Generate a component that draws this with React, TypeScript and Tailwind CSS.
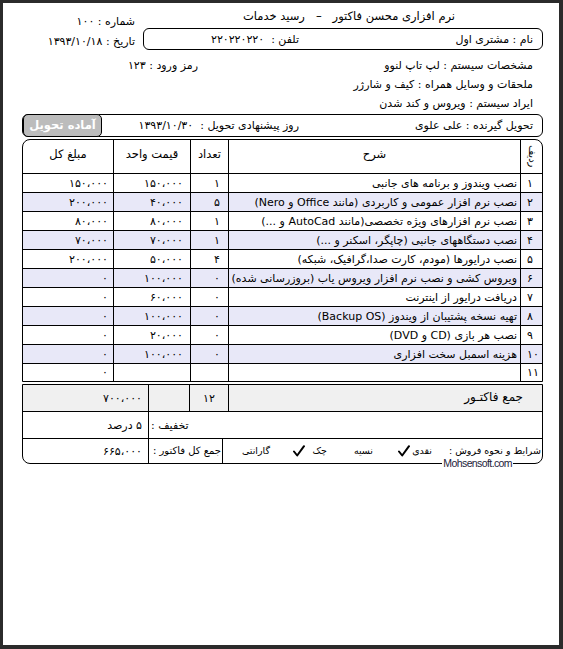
import React from "react";

const rows: { n: string; d: string; q: string; u: string; t: string }[] = [
  { n: "۱", d: "نصب ویندوز و برنامه های جانبی", q: "۱", u: "۱۵۰،۰۰۰", t: "۱۵۰،۰۰۰" },
  { n: "۲", d: "نصب نرم افزار عمومی و کاربردی (مانند Office و Nero)", q: "۵", u: "۴۰،۰۰۰", t: "۲۰۰،۰۰۰" },
  { n: "۳", d: "نصب نرم افزارهای ویژه تخصصی(مانند AutoCad و ...)", q: "۱", u: "۸۰،۰۰۰", t: "۸۰،۰۰۰" },
  { n: "۴", d: "نصب دستگاههای جانبی (چاپگر، اسکنر و ...)", q: "۱", u: "۷۰،۰۰۰", t: "۷۰،۰۰۰" },
  { n: "۵", d: "نصب درایورها (مودم، کارت صدا،گرافیک، شبکه)", q: "۴", u: "۵۰،۰۰۰", t: "۲۰۰،۰۰۰" },
  { n: "۶", d: "ویروس کشی و نصب نرم افزار ویروس یاب (بروزرسانی شده)", q: "۰", u: "۱۰۰،۰۰۰", t: "۰" },
  { n: "۷", d: "دریافت درایور از اینترنت", q: "۰", u: "۶۰،۰۰۰", t: "۰" },
  { n: "۸", d: "تهیه نسخه پشتیبان از ویندوز (Backup OS)", q: "۰", u: "۱۰۰،۰۰۰", t: "۰" },
  { n: "۹", d: "نصب هر بازی (CD و DVD)", q: "۰", u: "۲۰،۰۰۰", t: "۰" },
  { n: "۱۰", d: "هزینه اسمبل سخت افزاری", q: "۰", u: "۱۰۰،۰۰۰", t: "۰" },
  { n: "۱۱", d: "", q: "", u: "", t: "۰" },
];

function Check() {
  return (
    <svg width="12" height="12" viewBox="0 0 12 12" className="shrink-0">
      <path d="M1 6.5 L4.2 10.5 L11 1.2" fill="none" stroke="#000" strokeWidth="2" strokeLinecap="round" strokeLinejoin="round" />
    </svg>
  );
}

export default function App() {
  return (
    <div className="min-h-screen bg-[#2b2b2b] pl-[3px] pt-[3px] pr-[4px] pb-[4px]">
      <div
        dir="rtl"
        className="bg-white h-[642px] pr-[16px] pl-[19px] font-['DejaVu_Sans',sans-serif] text-[11px] text-black leading-none"
      >
        {/* header */}
        <div className="flex">
          <div className="w-[400px] flex flex-col">
            <div className="h-[25px] flex items-center justify-center text-[11.5px] pt-[2px] pl-[12px]">
              نرم افزاری محسن فاکتور&nbsp;&nbsp;&nbsp;–&nbsp;&nbsp;&nbsp;رسید خدمات
            </div>
            <div className="h-[22px] border border-black rounded-[6px] flex items-center whitespace-nowrap">
              <div className="w-[243px] pr-[9px]">نام : مشتری اول</div>
              <div className="flex-1">تلفن :&nbsp; ۲۲۰۲۲۰۲۲۰</div>
            </div>
          </div>
          <div className="flex-1 pr-[8px] pt-[9px] flex flex-col leading-[20px] whitespace-nowrap">
            <div>شماره : ۱۰۰</div>
            <div>تاریخ : ۱۳۹۳/۱۰/۱۸</div>
          </div>
        </div>

        <div className="pt-[4px] leading-[19px] whitespace-nowrap">
          <div className="flex">
            <div className="flex-1 pr-[10px]">مشخصات سیستم : لپ تاپ لنوو</div>
            <div className="w-[176px]">رمز ورود : ۱۲۳</div>
          </div>
          <div className="pr-[10px]">ملحقات و وسایل همراه : کیف و شارژر</div>
          <div className="pr-[10px]">ایراد سیستم : ویروس و کند شدن</div>
        </div>

        {/* delivery */}
        <div className="mt-[1px] h-[23px] border border-black rounded-[6px] flex items-stretch whitespace-nowrap">
          <div className="w-[243px] pr-[9px] flex items-center">تحویل گیرنده : علی علوی</div>
          <div className="flex-1 flex items-center">روز پیشنهادی تحویل :&nbsp; ۱۳۹۳/۱۰/۳۰</div>
          <div className="w-[79px] -my-px border border-black rounded-[5px] bg-[#bcbcbc] text-white font-bold text-[11.5px] flex items-center justify-center">
            آماده تحویل
          </div>
        </div>

        {/* table */}
        <div className="mt-[2px] border border-black rounded-t-[8px] overflow-hidden">
          <div className="h-[34px] border-b border-black grid grid-cols-[22px_292px_38px_77px_1fr] text-[11.5px]">
            <div className="border-l border-black flex items-center justify-center">
              <span className="[writing-mode:vertical-rl] text-[10px]">ردیف</span>
            </div>
            <div className="border-l border-black flex items-center justify-center pb-[3px]">شرح</div>
            <div className="border-l border-black flex items-center justify-center pb-[3px]">تعداد</div>
            <div className="border-l border-black flex items-center justify-center pb-[3px]">قیمت واحد</div>
            <div className="flex items-center justify-center pb-[3px]">مبلغ کل</div>
          </div>
          {rows.map((r, i) => (
            <div
              key={i}
              className={
                (i === rows.length - 1 ? "h-[17px] " : "h-[19px] border-b border-black ") +
                (i % 2 === 1 ? "bg-[#e8e8f8] " : "bg-white ") +
                "grid grid-cols-[22px_292px_38px_77px_1fr]"
              }
            >
              <div className="border-l border-black flex items-center justify-end pl-[6px]">{r.n}</div>
              <div className="border-l border-black flex items-center pr-[3px] whitespace-nowrap overflow-hidden">{r.d}</div>
              <div className="border-l border-black flex items-center justify-start pr-[8px]">{r.q}</div>
              <div className="border-l border-black flex items-center justify-start pr-[7px]">{r.u}</div>
              <div className="flex items-center justify-start pr-[5px]">{r.t}</div>
            </div>
          ))}
        </div>

        {/* summary */}
        <div className="relative mt-[2px] border border-black rounded-b-[8px]">
          <div className="h-[27px] border-b border-black bg-[#f0f0f0] grid grid-cols-[314px_39px_41px_1fr]">
            <div className="border-l border-black pr-[19px] pt-[6px] text-[12px]">جمع فاکتـور</div>
            <div className="border-l border-black flex items-center justify-center">۱۲</div>
            <div className="border-l border-black"></div>
            <div className="flex items-center justify-start pr-[6px]">۷۰۰،۰۰۰</div>
          </div>
          <div className="h-[27px] border-b border-black grid grid-cols-[394px_1fr] whitespace-nowrap">
            <div className="border-l border-black flex items-center justify-end pl-[2px]">تخفیف :</div>
            <div className="flex items-center pr-[6px]">۵ درصد</div>
          </div>
          <div className="h-[24px] grid grid-cols-[320px_74px_1fr] whitespace-nowrap">
            <div className="border-l border-black flex items-center text-[9.5px]">
              <span className="w-[90px] shrink-0 pr-[1px]">شرایط و نحوه فروش :</span>
              <span className="w-[20px] shrink-0"></span>
              <span className="w-[16px] shrink-0">نقدی</span>
              <span className="w-[6px] shrink-0"></span>
              <Check />
              <span className="w-[25px] shrink-0"></span>
              <span className="w-[14px] shrink-0">نسیه</span>
              <span className="w-[32px] shrink-0"></span>
              <span className="w-[14px] shrink-0">چک</span>
              <span className="w-[8px] shrink-0"></span>
              <Check />
              <span className="w-[23px] shrink-0"></span>
              <span className="w-[24px] shrink-0">گارانتی</span>
            </div>
            <div className="border-l border-black flex items-center pr-[1px] text-[10px] overflow-hidden">جمع کل فاکتور :</div>
            <div className="flex items-center pr-[6px]">۶۶۵،۰۰۰</div>
          </div>
          <span
            dir="ltr"
            className="absolute right-[29px] bottom-[-6px] bg-white px-[1px] text-[10.5px] leading-[11px] tracking-[-0.6px] text-[#1c1c3a] font-['Liberation_Sans',sans-serif]"
          >
            Mohsensoft.com
          </span>
        </div>
      </div>
    </div>
  );
}
